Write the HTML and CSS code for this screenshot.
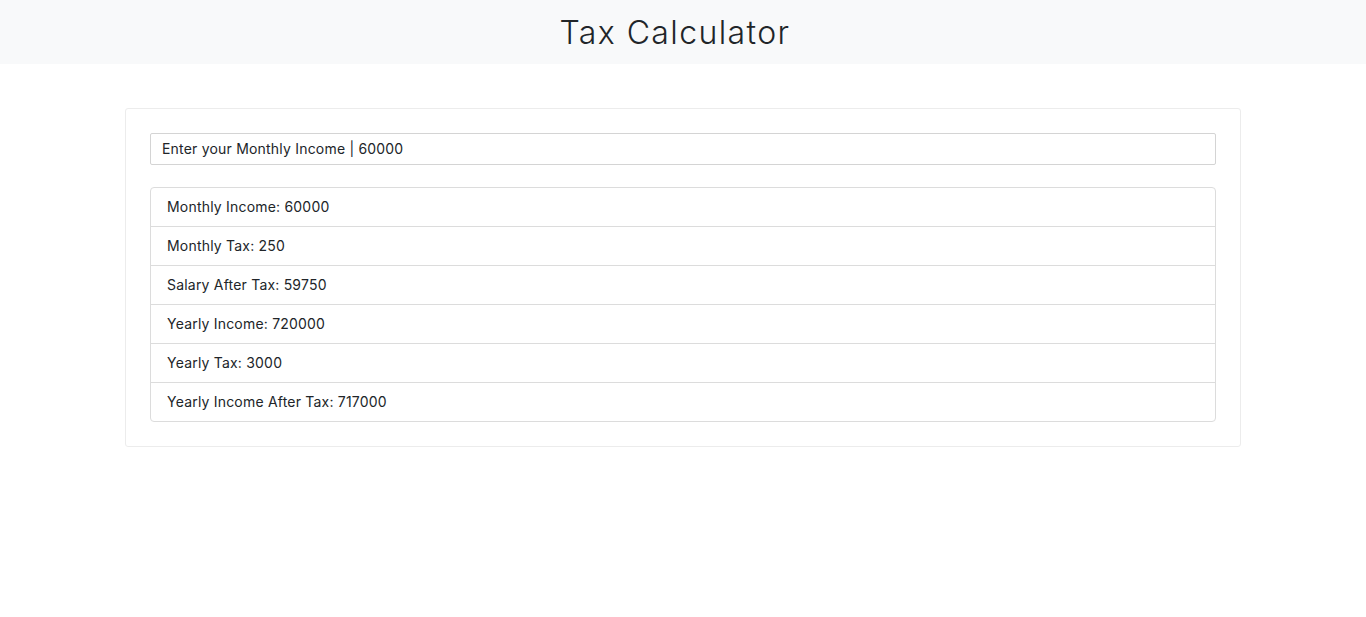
FILE: index.html
```html
<!DOCTYPE html>
<html lang="en">
<head>
<meta charset="utf-8">
<title>Tax Calculator</title>
<link rel="stylesheet" href="styles.css">
</head>
<body>
<header class="topbar">
  <h1 class="title">Tax Calculator</h1>
</header>
<main class="wrap">
  <section class="card">
    <input class="income-input" type="text" value="Enter your Monthly Income | 60000">
    <ul class="results">
      <li class="result">Monthly Income: 60000</li>
      <li class="result">Monthly Tax: 250</li>
      <li class="result">Salary After Tax: 59750</li>
      <li class="result">Yearly Income: 720000</li>
      <li class="result">Yearly Tax: 3000</li>
      <li class="result">Yearly Income After Tax: 717000</li>
    </ul>
  </section>
</main>
</body>
</html>
```

FILE: styles.css
```css
* { box-sizing: border-box; }
html, body { margin: 0; padding: 0; }
body {
  font-family: Inter, "Open Sans", sans-serif;
  color: #212529;
  background: #fff;
  font-size: 14px;
  letter-spacing: 0.2px;
}
.topbar {
  background: #f8f9fa;
  height: 64px;
  display: flex;
  align-items: center;
  justify-content: center;
  padding-right: 16px;
}
.title {
  margin: 0;
  font-size: 32px;
  font-weight: 300;
  letter-spacing: 1.4px;
}
.wrap {
  padding: 44px 125px 0;
}
.card {
  border: 1px solid #ececec;
  border-radius: 3px;
  padding: 24px 24px 24px;
  display: flex;
  flex-direction: column;
  gap: 22px;
}
.income-input {
  height: 32px;
  width: 100%;
  border: 1px solid #d4d4d4;
  border-radius: 2px;
  padding: 0 11px 1px;
  font: inherit;
  letter-spacing: 0.2px;
  color: #212529;
  outline: none;
}
.results {
  list-style: none;
  margin: 0;
  padding: 0;
  border: 1px solid #dcdcdc;
  border-radius: 4px;
}
.result {
  height: 39px;
  display: flex;
  align-items: center;
  padding: 0 16px 1px;
  border-top: 1px solid #dcdcdc;
}
.result:first-child { border-top: 0; height: 38px; }
```
